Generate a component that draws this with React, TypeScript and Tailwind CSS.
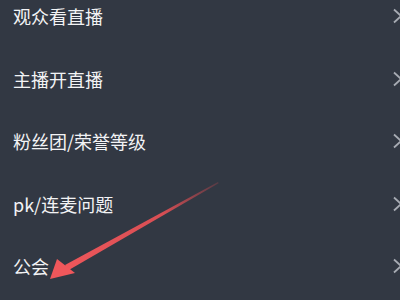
const items = ["观众看直播", "主播开直播", "粉丝团/荣誉等级", "pk/连麦问题", "公会"];

function Chevron() {
  return (
    <svg width="10" height="16" viewBox="0 0 10 16" className="shrink-0 -mr-[3px]">
      <polyline points="1,1.5 8,8 1,14.5" fill="none" stroke="#a7abb3" strokeWidth="1.8" />
    </svg>
  );
}

export default function App() {
  return (
    <div
      className="relative w-[400px] h-[300px] overflow-hidden bg-[#323843] text-[#f2f3f5]"
      style={{ fontFamily: '"Noto Sans CJK SC", "Noto Sans", sans-serif' }}
    >
      <div className="flex flex-col -mt-[15px]">
        {items.map((t) => (
          <div key={t} className="h-[62.5px] flex items-center justify-between pl-[13px]">
            <span className="text-[18px] leading-none">{t}</span>
            <Chevron />
          </div>
        ))}
      </div>
      {/* red arrow */}
      <svg className="absolute left-0 top-0" width="400" height="300" viewBox="0 0 400 300">
        <defs>
          <linearGradient id="fade" x1="218" y1="182" x2="60" y2="272" gradientUnits="userSpaceOnUse">
            <stop offset="0" stopColor="#e84a4f" stopOpacity="0.2" />
            <stop offset="0.35" stopColor="#ea5156" stopOpacity="0.9" />
            <stop offset="1" stopColor="#f0575b" />
          </linearGradient>
        </defs>
        <polygon points="218,182 218.6,183.2 68,270.5 65,265" fill="url(#fade)" />
        <polygon points="50,279 57,259 75,273" fill="#f0575b" />
      </svg>
    </div>
  );
}
